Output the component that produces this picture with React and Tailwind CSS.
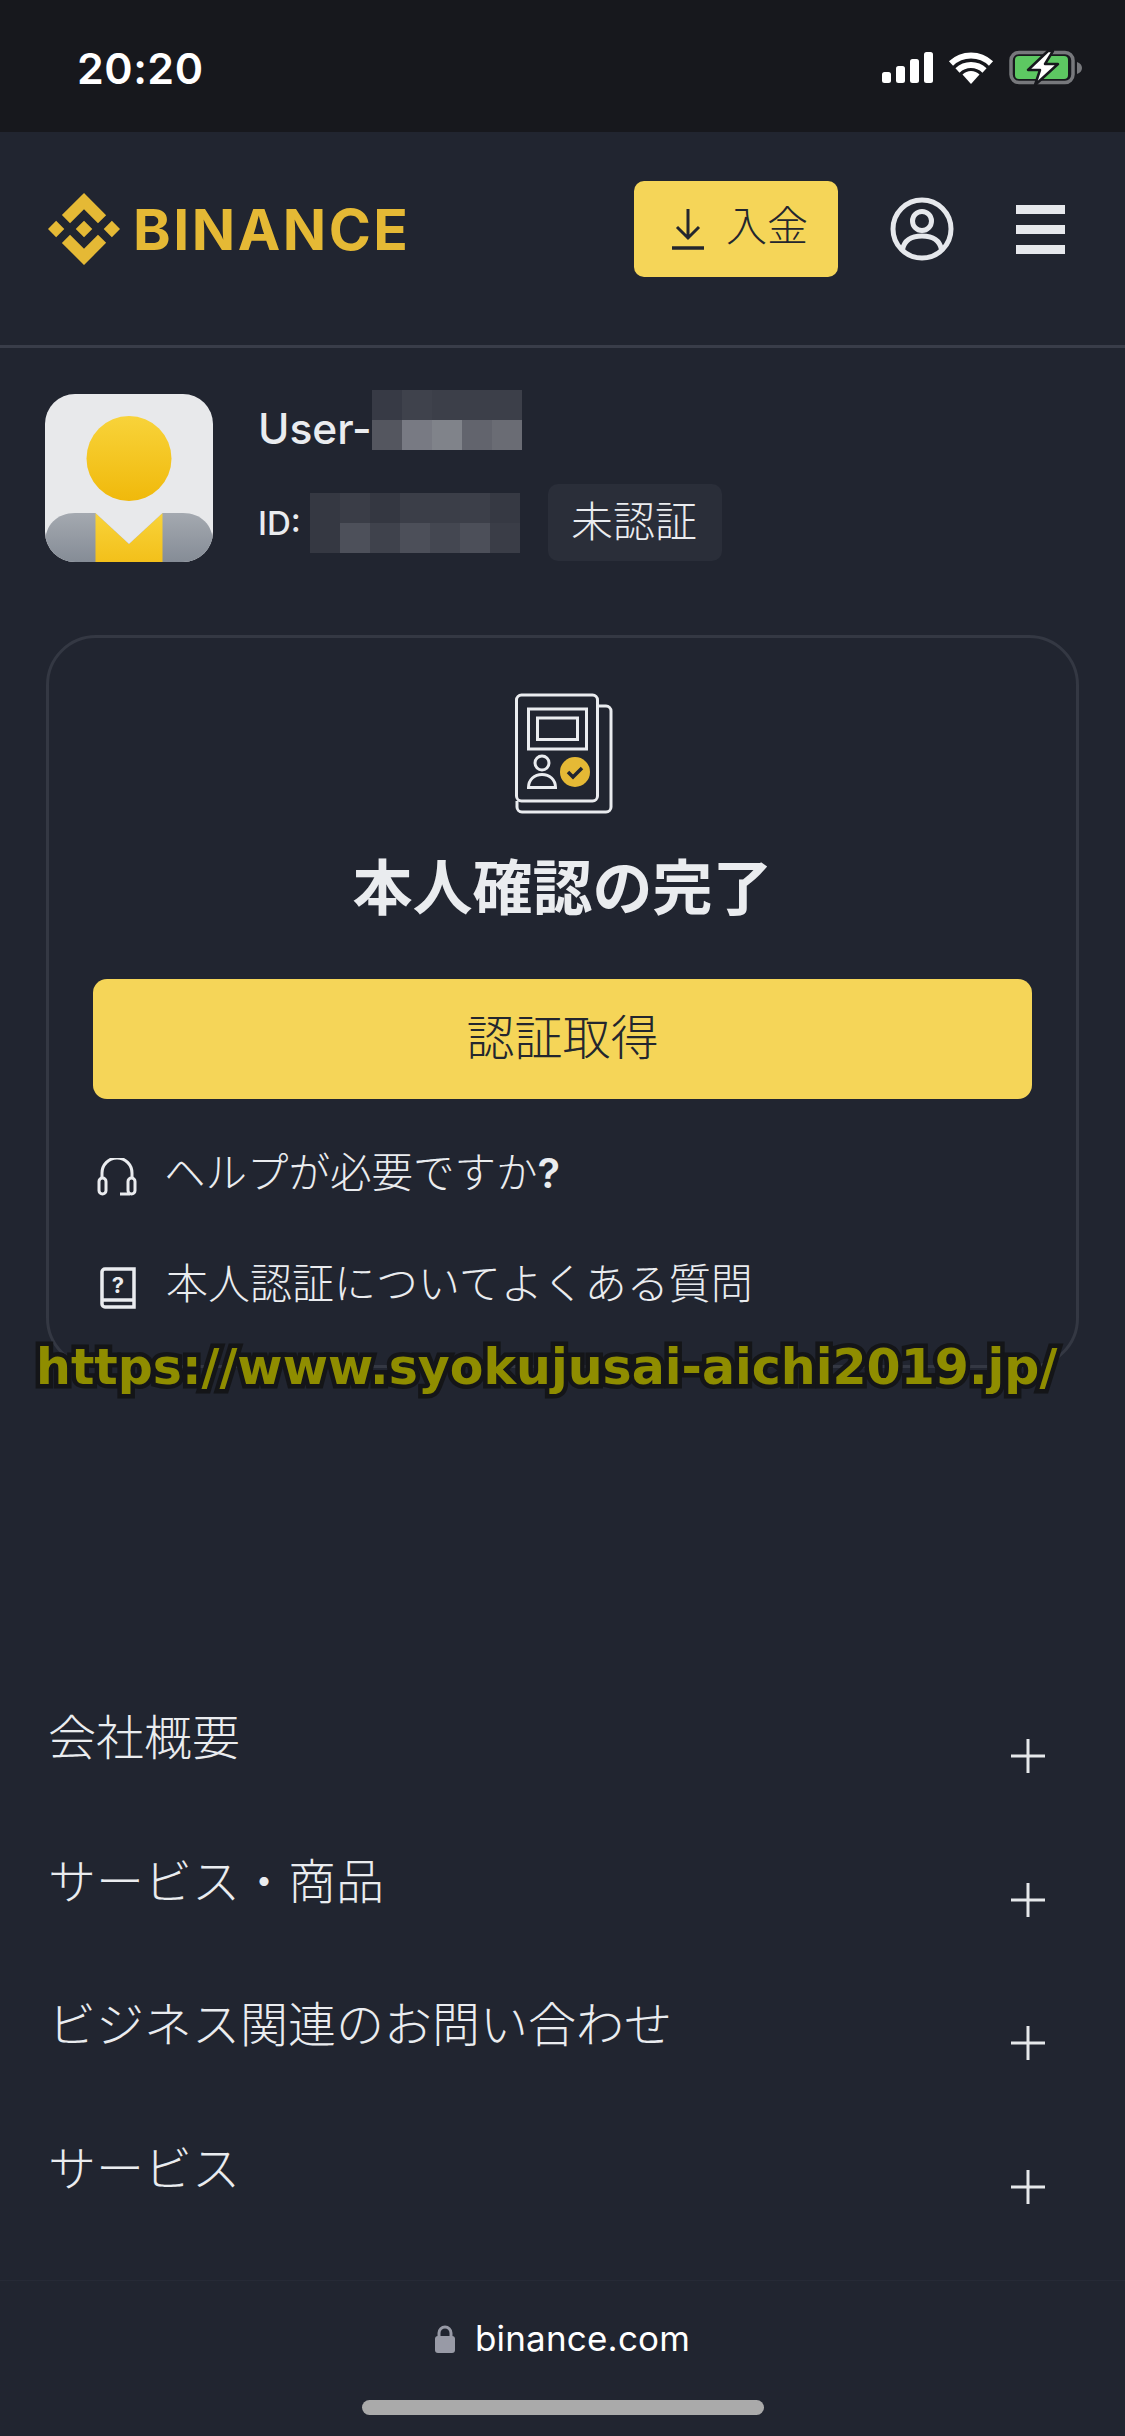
function Blocks({ colors, cols }) {
  return (
    <div className="grid" style={{ gridTemplateColumns: `repeat(${cols}, 30px)`, gridAutoRows: "30px" }}>
      {colors.map((c, i) => <div key={i} style={{ background: c }} />)}
    </div>
  );
}
function Plus() {
  return (
    <svg width="36" height="36" viewBox="0 0 36 36" className="mt-[33px] shrink-0">
      <path d="M18 1v34M1 18h34" stroke="#e6e8ea" strokeWidth="3" />
    </svg>
  );
}
function Row({ children }) {
  return (
    <div className="flex justify-between items-start h-[143.5px] pl-[48px] pr-[79px]">
      <span className="text-[48px] leading-[56px] font-light text-[#eaecef] mt-[5px]">{children}</span>
      <Plus />
    </div>
  );
}
export default function App() {
  const user = ["#373a45","#3f424c","#3c3f49","#3c3f49","#3c3f49","#54565f","#787a83","#80838a","#62646d","#6a6c74"];
  const id = ["#353842","#3a3d47","#343741","#3b3e48","#3b3e48","#3c3f49","#363943","#353842","#4d505a","#3f424c","#4c4f59","#444751","#4c4f59","#3a3d47"];
  return (
    <div className="relative w-[1125px] h-[2436px] overflow-hidden bg-[#212530] text-[#eaecef] flex flex-col" style={{ fontFamily: 'Inter, "Noto Sans CJK JP", sans-serif' }}>
      {/* status bar */}
      <div className="h-[132px] bg-[#17181d] flex items-center justify-between pl-[77px] pr-[41px] shrink-0">
        <span className="text-[43px] font-semibold text-white leading-none mt-[4px] tracking-[0.5px]">20:20</span>
        <svg width="204" height="40" viewBox="880 49 204 40" className="mt-[3px]">
          <g fill="#fff">
            <rect x="882" y="73" width="9" height="11" rx="2.5" />
            <rect x="896" y="67" width="9" height="17" rx="2.5" />
            <rect x="910" y="60" width="9" height="24" rx="2.5" />
            <rect x="924" y="53" width="9" height="31" rx="2.5" />
            <path d="M971 85l-8.5-9.5a12 12 0 0 1 17 0z" />
          </g>
          <path d="M951 64.5a29 29 0 0 1 40 0M957.5 71.5a19.5 19.5 0 0 1 27 0" fill="none" stroke="#fff" strokeWidth="6" />
          <rect x="1011" y="53.5" width="62" height="30" rx="8" fill="none" stroke="#77787c" strokeWidth="3.5" />
          <rect x="1015" y="57" width="53" height="23" rx="4" fill="#5dc862" />
          <path d="M1077 63c3 1 5 3 5 6s-2 5-5 6z" fill="#77787c" />
          <path d="M1048 52l-20 19h12l-5 15 23-21h-13l8-13z" fill="#fff" stroke="#17181d" strokeWidth="2.5" strokeLinejoin="round" />
        </svg>
      </div>
      {/* header */}
      <div className="h-[216px] border-b-[3px] border-[#393d49] flex items-center pl-[48px] pr-[60px] shrink-0">
        <svg width="72" height="72" viewBox="0 0 126.61 126.61" fill="#e5b935" className="mt-[-19px]">
          <path d="M38.73 53.2l24.59-24.58 24.6 24.6 14.3-14.31L63.32 0 24.43 38.9zM0 63.31l14.3-14.31 14.31 14.31-14.31 14.3zM38.73 73.41l24.59 24.59 24.6-24.6 14.31 14.29L63.32 126.61 24.41 87.72zM98 63.31l14.3-14.31 14.31 14.3-14.31 14.31zM77.83 63.3L63.32 48.78 52.59 59.51l-1.24 1.23-2.54 2.54 14.51 14.5 14.51-14.47z" />
        </svg>
        <span className="ml-[13px] text-[57px] font-bold text-[#e5b935] leading-none mt-[-19px] tracking-[2.5px]">BINANCE</span>
        <div className="ml-auto mt-[-19px] w-[204px] h-[96px] rounded-[10px] bg-[#f5d558] flex items-center pl-[36px] gap-[20px] text-[#23262e]">
          <svg width="36" height="42" viewBox="0 0 36 42" fill="none" stroke="#23262e" strokeWidth="3">
            <path d="M18 1v29M7 19l11 11 11-11" />
            <path d="M2 40h32" strokeWidth="3.5" />
          </svg>
          <span className="text-[41px] leading-none font-light mt-[-6px]">入金</span>
        </div>
        <svg width="64" height="64" viewBox="0 0 64 64" fill="none" stroke="#e6e8ec" strokeWidth="5" className="ml-[52px] mt-[-19px]">
          <circle cx="32" cy="32" r="29" />
          <circle cx="32" cy="24" r="9.5" />
          <path d="M12.5 52.5c2-10 9.5-13.5 19.5-13.5s17.5 3.500 19.500 13.500" />
        </svg>
        <div className="ml-[62px] mt-[-19px] w-[49px] flex flex-col gap-[11px]">
          <div className="h-[9px] bg-[#e6e8ec]" />
          <div className="h-[9px] bg-[#e6e8ec]" />
          <div className="h-[9px] bg-[#e6e8ec]" />
        </div>
      </div>
      {/* profile */}
      <div className="flex pl-[45px] pt-[46px] shrink-0">
        <svg width="168" height="168" viewBox="0 0 168 168" className="rounded-[30px] shrink-0">
          <defs>
            <linearGradient id="yg" x1="0" y1="0" x2="0" y2="1"><stop offset="0" stopColor="#f8d33a" /><stop offset="1" stopColor="#f0b90b" /></linearGradient>
            <linearGradient id="gg" x1="0" y1="0" x2="0" y2="1"><stop offset="0" stopColor="#a4a9b0" /><stop offset="1" stopColor="#858c96" /></linearGradient>
            <linearGradient id="tg" x1="0" y1="0" x2="0" y2="1"><stop offset="0" stopColor="#f8d33a" /><stop offset="1" stopColor="#f3c01a" /></linearGradient>
          </defs>
          <rect width="168" height="168" fill="#e8e9eb" />
          <circle cx="84" cy="64.500" r="42.500" fill="url(#yg)" />
          <path d="M0 168V149c0-18 12-30 30-30h108c18 0 30 12 30 30v19z" fill="url(#gg)" />
          <path d="M50.500 168V119L84 150 117.500 119V168z" fill="url(#tg)" />
          <path d="M50.500 119L84 150 117.500 119z" fill="#e8e9eb" />
        </svg>
        <div className="ml-[45px] flex flex-col w-[520px]">
          <div className="flex items-start h-[60px] mt-[-4px]">
            <span className="text-[42.5px] font-medium leading-[60px] mt-[9px]">User-</span>
            <Blocks cols={5} colors={user} />
          </div>
          <div className="flex items-center mt-[34px]">
            <span className="text-[33px] font-medium leading-none w-[52px] mt-[2px]">ID:</span>
            <Blocks cols={7} colors={id} />
            <div className="ml-[28px] w-[174px] h-[77px] rounded-[10px] bg-[#2a2e39] flex items-center justify-center text-[42px] font-light text-[#eaecef] pb-[3px] pr-[2px]">未認証</div>
          </div>
        </div>
      </div>
      {/* card */}
      <div className="mx-[46px] mt-[73px] h-[733px] rounded-[50px] border-[3px] border-[#343843] flex flex-col items-center shrink-0">
        <svg width="99" height="123" viewBox="515 692 99 123" className="mt-[54px] ml-[2px]" fill="none" stroke="#eaecef" strokeWidth="3">
          <path d="M600 706h7a5 5 0 0 1 5 5v96a5 5 0 0 1-5 5h-84a5 5 0 0 1-5-5v-6" />
          <rect x="517.500" y="695" width="81" height="106" rx="5" />
          <rect x="529.500" y="709" width="58" height="40" />
          <rect x="538.500" y="718" width="40" height="21.500" />
          <circle cx="543" cy="763" r="7" />
          <path d="M529.500 787.500c0-8 6-13 13.500-13s13.500 5 13.500 13z" />
          <circle cx="576" cy="772" r="15" fill="#e5b935" stroke="none" />
          <path d="M569 772l5 5 9-9" stroke="#212530" strokeWidth="3.500" />
        </svg>
        <div className="text-[60px] font-bold leading-none mt-[43px] text-[#eaecef]">本人確認の完了</div>
        <div className="mt-[61px] w-[939px] h-[120px] rounded-[14px] bg-[#f5d558] flex items-center justify-center text-[48px] font-light text-[#23262e] pb-[3px]">認証取得</div>
        <div className="self-start ml-[48px] mt-[57px] flex items-center">
          <svg width="40" height="38" viewBox="0 0 40 38" fill="none" stroke="#eaecef" strokeWidth="3">
            <path d="M5 21v-6a15 15 0 0 1 30 0v6" />
            <rect x="2" y="20" width="7" height="16" rx="3.500" />
            <rect x="31" y="20" width="7" height="16" rx="3.500" />
            <path d="M23 36h10" />
          </svg>
          <span className="ml-[27px] text-[41.500px] font-light leading-[50px] mt-[-8px]">ヘルプが必要ですか<span className="font-semibold">?</span></span>
        </div>
        <div className="self-start ml-[51px] mt-[69px] flex items-center">
          <svg width="36" height="42" viewBox="0 0 36 42" fill="none" stroke="#eaecef" strokeWidth="3.500">
            <path d="M34 2H5a3 3 0 0 0-3 3v32a3 3 0 0 0 3 3h29V2zM3 33h31" />
            <text x="18" y="26" fontSize="22" fontWeight="700" fill="#eaecef" stroke="none" textAnchor="middle">?</text>
          </svg>
          <span className="ml-[30px] text-[42px] font-light leading-[50px] mt-[-8px] whitespace-nowrap">本人認証についてよくある質問</span>
        </div>
      </div>
      {/* accordion */}
      <div className="mt-[337px] flex flex-col shrink-0">
        <Row>会社概要</Row>
        <Row>サービス・商品</Row>
        <Row>ビジネス関連のお問い合わせ</Row>
        <Row>サービス</Row>
      </div>
      {/* footer */}
      <div className="absolute left-0 right-0 top-[2280px] h-[156px] border-t border-[#262a36] flex flex-col items-center">
        <div className="flex items-center mt-[35px] h-[44px]">
          <svg width="20" height="28" viewBox="0 0 20 28" fill="#989aa6" className="mt-[2px]">
            <rect y="11" width="20" height="17" rx="3" />
            <path d="M4 12V8a6 6 0 0 1 12 0v4" fill="none" stroke="#989aa6" strokeWidth="3" />
          </svg>
          <span className="ml-[20px] text-[35px] leading-none text-white font-normal tracking-[0.2px]">binance.com</span>
        </div>
        <div className="mt-[40px] w-[402px] h-[15px] rounded-full bg-[#aaaaaa]" />
      </div>
      {/* watermark */}
      <div className="absolute left-[36px] top-[1337px] whitespace-nowrap text-[49px] leading-[62px] font-bold text-[#8f8d00] [-webkit-text-stroke:9px_#141518] [paint-order:stroke_fill]" style={{ fontFamily: '"DejaVu Sans", sans-serif' }}>https://www.syokujusai-aichi2019.jp/</div>
    </div>
  );
}
